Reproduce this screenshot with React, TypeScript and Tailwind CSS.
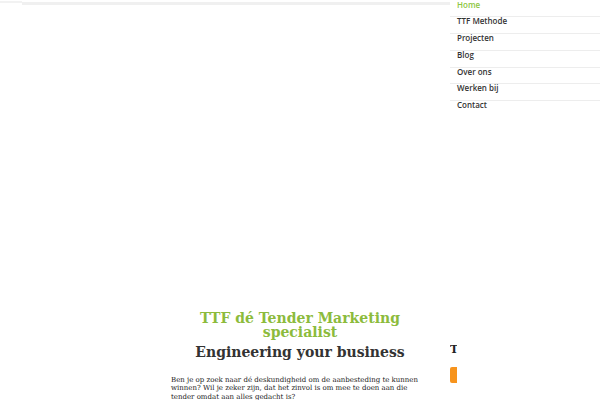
const menu = ['Home', 'TTF Methode', 'Projecten', 'Blog', 'Over ons', 'Werken bij', 'Contact'];

export default function App() {
  return (
    <div className="relative h-[400px] w-[600px] overflow-hidden bg-white">
      {/* top shadow strip */}
      <div className="flex h-[5px] w-[454px] items-start">
        <div className="mt-[1px] h-[2px] w-[22px] bg-[#f2f2f2]" />
        <div className="mt-[2px] h-[2.5px] flex-1 bg-[#f0f0f0]" />
      </div>

      {/* dropdown menu */}
      <nav className="absolute right-0 top-0 w-[150px] bg-white pt-[0.7px] font-['Open_Sans',sans-serif] text-[8px] font-semibold">
        {menu.map((item, i) => (
          <div
            key={item}
            className={`pb-[7.75px] pl-[7px] leading-[8px] ${
              i === 0 ? 'text-[#8dc63f]' : 'border-t border-[#ededed] text-[#333]'
            }`}
          >
            {item}
          </div>
        ))}
      </nav>

      {/* content */}
      <div className="mt-[306px] flex pl-[171px] font-['DejaVu_Serif',serif]">
        <div className="w-[258px]">
          <h1 className="text-center text-[14px] font-bold leading-[14px] text-[#8cbb3c]">
            TTF dé Tender Marketing specialist
          </h1>
          <h2 className="mt-[4px] text-center text-[14px] font-bold leading-[18px] text-[#333]">
            Engineering your business
          </h2>
          <p className="mt-[14.75px] text-[7px] leading-[8.5px] text-[#222]">
            Ben je op zoek naar dé deskundigheid om de aanbesteding te kunnen winnen? Wil je zeker zijn, dat het zinvol is om mee te doen aan die tender omdat aan alles gedacht is?
          </p>
        </div>
        <div className="ml-[21px] w-[7px] overflow-hidden pt-[32px]">
          <div className="whitespace-nowrap text-[11px] font-bold leading-[14px] text-[#222]">T</div>
          <div className="mt-[10px] h-[16px] w-[20px] rounded-[2px] bg-[#f7941d]" />
        </div>
      </div>
    </div>
  );
}
